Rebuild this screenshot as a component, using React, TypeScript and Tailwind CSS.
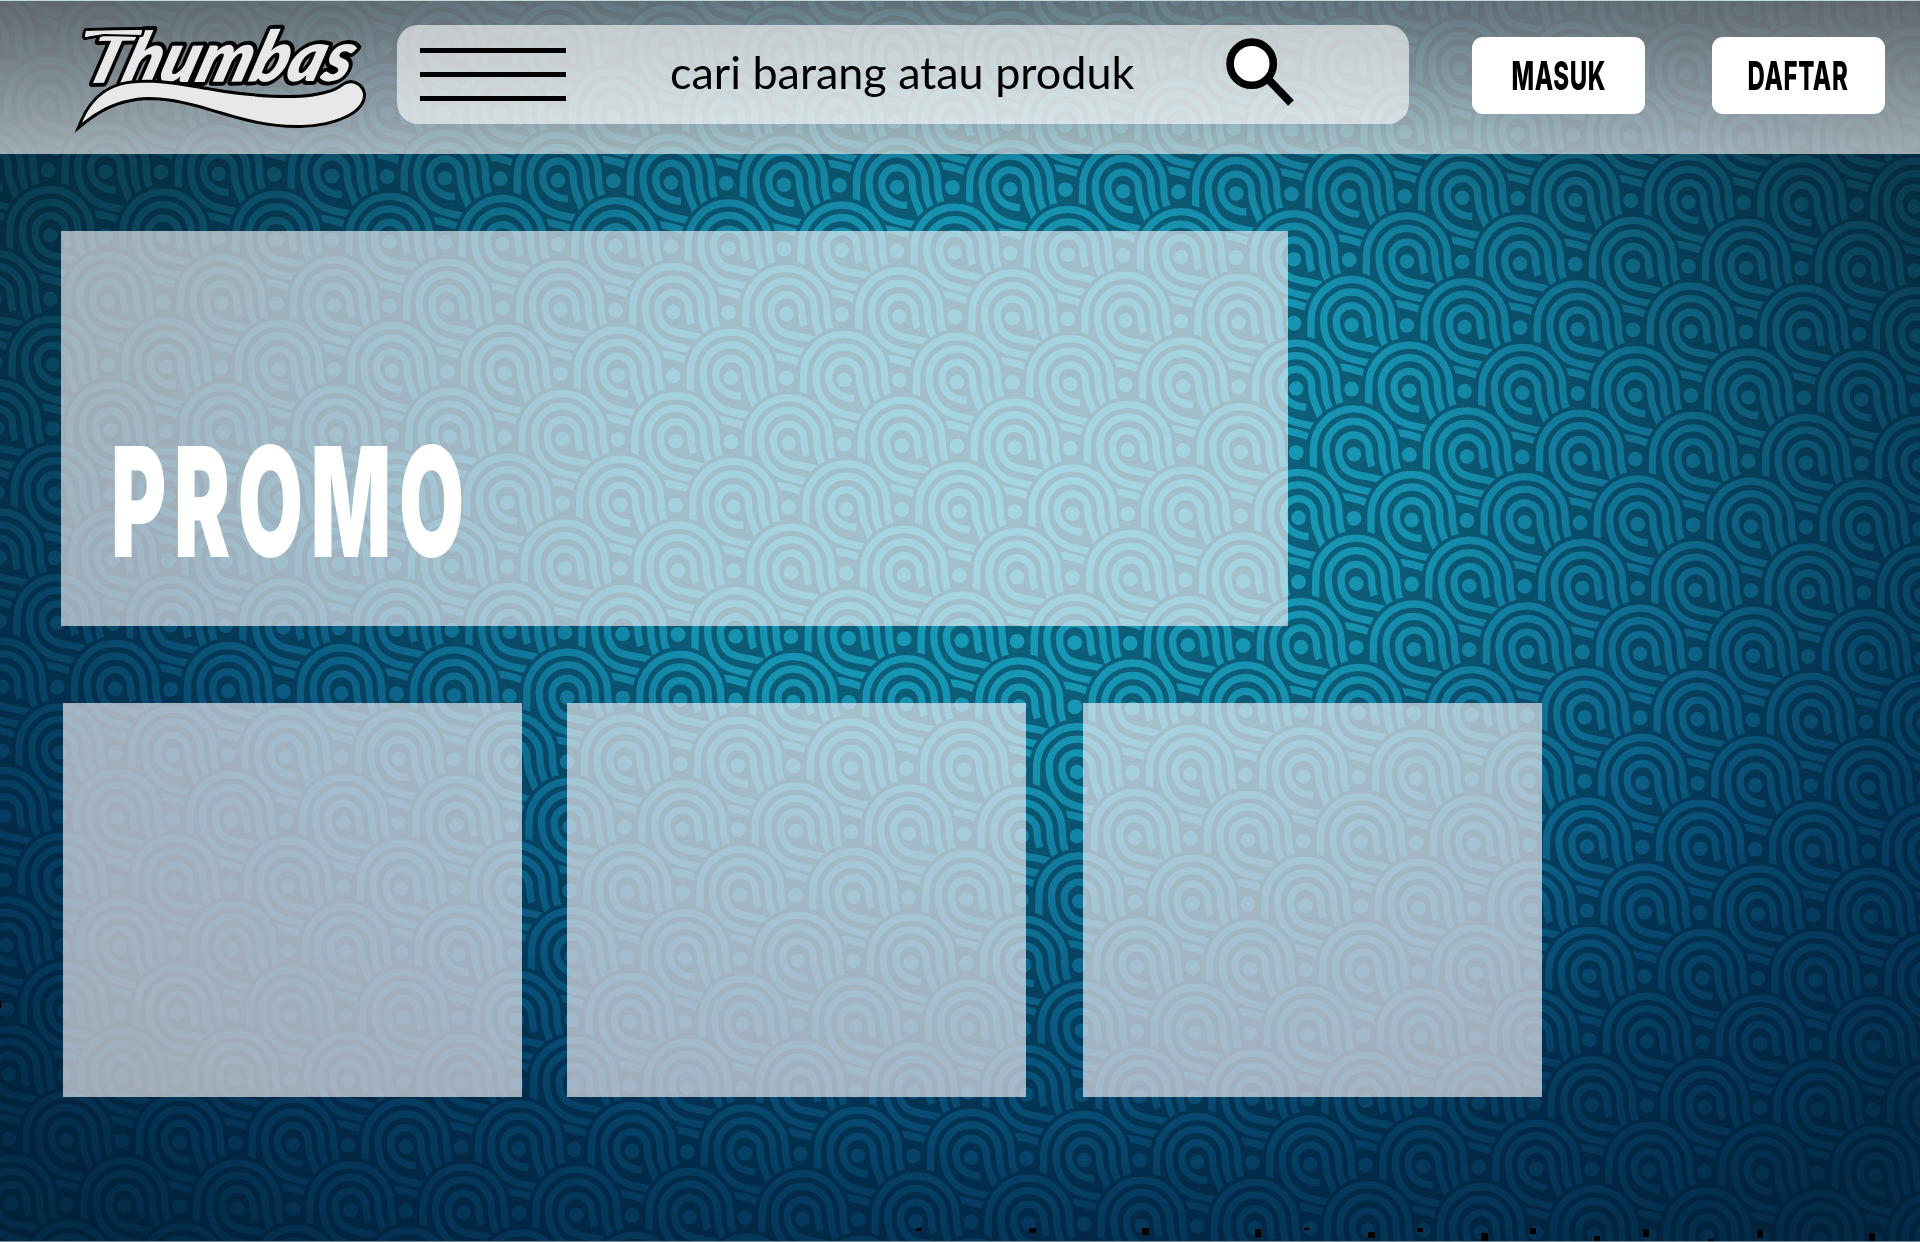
import React from "react";

// Half-rows whose inner ring runs its right leg down instead of curling out.
const LONG_LEG_ROWS = [0, 3, 5, 9, 12, 15];

type Motif = { x: number; y: number; long: boolean };

const motifs: Motif[] = [];
for (let k = -4; k <= 18; k++) {
  for (let m = -2; m <= 17; m++) {
    const col = m + (Math.abs(k) % 2 === 1 ? 0.5 : 0);
    const row = k / 2;
    motifs.push({
      x: 105.7 + col * 113.05 + row * 2.33,
      y: 171.7 + col * 2.18 + row * 129.3,
      long: LONG_LEG_ROWS.includes(k),
    });
  }
}

const specks = [
  [916, 1228, 5, 3],
  [1029, 1228, 7, 5],
  [1142, 1228, 7, 7],
  [1255, 1229, 6, 8],
  [1304, 1228, 5, 2],
  [1368, 1232, 7, 6],
  [1417, 1228, 6, 4],
  [1481, 1233, 7, 8],
  [1530, 1228, 6, 6],
  [1594, 1236, 6, 5],
  [1643, 1229, 6, 8],
  [1708, 1239, 6, 2],
  [1757, 1230, 6, 8],
  [1869, 1233, 6, 8],
  [0, 1001, 1, 7],
];

function Backdrop() {
  return (
    <svg className="absolute inset-0 h-full w-full" viewBox="0 0 1920 1242" aria-hidden="true">
      <defs>
        <linearGradient id="base" x1="0" y1="0" x2="0" y2="1">
          <stop offset="0" stopColor="#0e5365" />
          <stop offset="0.3" stopColor="#0c5572" />
          <stop offset="0.65" stopColor="#074c76" />
          <stop offset="1" stopColor="#053f66" />
        </linearGradient>
        <radialGradient id="glow" gradientUnits="userSpaceOnUse" cx="0" cy="0" r="1" gradientTransform="translate(1030 490) scale(980 720)">
          <stop offset="0" stopColor="#1aa3bf" />
          <stop offset="0.4" stopColor="#189ab8" stopOpacity="0.88" />
          <stop offset="0.72" stopColor="#1383a6" stopOpacity="0.4" />
          <stop offset="1" stopColor="#0b6690" stopOpacity="0" />
        </radialGradient>
        <radialGradient id="edge" gradientUnits="userSpaceOnUse" cx="0" cy="0" r="1" gradientTransform="translate(960 580) scale(1180 900)">
          <stop offset="0.6" stopColor="#00101f" stopOpacity="0" />
          <stop offset="1" stopColor="#00101f" stopOpacity="0.42" />
        </radialGradient>
        <g id="common">
          <path d="M-48 30V-5A48 48 0 0 1 48 -5V30Z" fill="#fff" />
          <g fill="none" stroke="#000" strokeWidth="7.3">
            <path d="M-40 24C-41 12 -40.5 4 -40.5 -5A40.5 40.5 0 0 1 40.5 -5C40.5 6 42 10 46 22" />
            <path d="M24 39C4 35 -8 34 -18 24C-26 15 -28 5 -28 -5A28 28 0 0 1 28 -5C28 8 31 15 37 28" />
            <path d="M-14 42Q0 43 15 49" />
          </g>
          <circle r="7.3" fill="#000" />
          <circle cy="64" r="7.4" fill="#000" />
        </g>
        <g id="long">
          <use href="#common" />
          <path d="M10 18.5C-6 18 -15.3 9 -15.3 -4A15.3 15.3 0 0 1 15.3 -4C15.3 8 18 13 25 30" fill="none" stroke="#000" strokeWidth="7.3" />
        </g>
        <g id="short">
          <use href="#common" />
          <path d="M34 29C20 20 3 24 -7 16C-13 11 -15.3 4 -15.3 -4A15.3 15.3 0 0 1 15.3 -4C15.3 3 16 6 18 12" fill="none" stroke="#000" strokeWidth="7.3" />
        </g>
        <mask id="grooves" maskUnits="userSpaceOnUse" x="0" y="0" width="1920" height="1242">
          <rect width="1920" height="1242" fill="#fff" />
          {motifs.map((p, i) => (
            <use key={i} href={p.long ? "#long" : "#short"} x={p.x} y={p.y} />
          ))}
        </mask>
      </defs>
      <rect width="1920" height="1242" fill="url(#base)" />
      <rect width="1920" height="1242" fill="url(#glow)" />
      <rect width="1920" height="1242" fill="url(#edge)" />
      <rect width="1920" height="1242" fill="#00142a" fillOpacity="0.43" mask="url(#grooves)" />
      {specks.map(([x, y, w, h], i) => (
        <rect key={i} x={x} y={y} width={w} height={h} fill="#000" />
      ))}
      <rect y="1241" width="1920" height="1" fill="#6f8798" />
    </svg>
  );
}

function Logo() {
  return (
    <svg className="h-[154px] w-[337px] shrink-0" viewBox="60 0 337 154" role="img" aria-label="Thumbas">
      <g strokeLinejoin="round" paintOrder="stroke">
        <text
          transform="translate(82 83) rotate(-0.5) skewX(-18)"
          fontFamily="Lato, sans-serif"
          fontStyle="italic"
          fontWeight="800"
          fontSize="70"
          textLength="265"
          lengthAdjust="spacingAndGlyphs"
          fill="#e8e8e8"
          stroke="#000"
          strokeWidth="8"
        >
          Thumbas
        </text>
        <path d="M86 31L142 30L141 34L104 33L85 37Z" fill="#e8e8e8" stroke="#000" strokeWidth="6" />
        <path d="M86 31L142 30L141 35L104 34L85 37Z" fill="#e8e8e8" />
        <path
          d="M82 123C89 106 103 84 138 83C180 80 220 98 290 98C318 98 336 92 343 86C352 79 362 86 363 94C364 110 338 124 300 125C240 126 200 97 148 97C118 98 98 110 82 123Z"
          fill="#e8e8e8"
          stroke="#000"
          strokeWidth="6"
          strokeLinejoin="miter"
          strokeMiterlimit="8"
        />
      </g>
    </svg>
  );
}

function NavButton({ label }: { label: string }) {
  return (
    <button className="flex h-[77px] w-[173px] items-center justify-center rounded-[11px] bg-white">
      <span className="inline-block scale-x-[0.6] font-['Inter'] text-[40px] leading-none font-extrabold tracking-[1px] whitespace-nowrap text-black">
        {label}
      </span>
    </button>
  );
}

export default function App() {
  return (
    <div className="relative h-[1242px] w-[1920px] overflow-hidden font-['Lato',sans-serif]">
      <Backdrop />
      <div className="relative">
        <header className="flex h-[154px] border-t border-[#c4dadb] bg-linear-to-b from-[rgba(150,140,140,0.62)] to-[rgba(238,235,235,0.65)] pl-[60px]">
          <div className="-mt-px">
            <Logo />
          </div>
          <div className="mt-6 flex h-[99px] w-[1012px] items-center rounded-[21px] bg-white/60">
            <div className="ml-[23px] flex w-[146px] flex-col gap-[19px]">
              <span className="h-[5px] bg-black" />
              <span className="h-[5px] bg-black" />
              <span className="h-[5px] bg-black" />
            </div>
            <div className="ml-[104px] w-[462px] pb-1">
              <span className="inline-block origin-left scale-x-[1.021] text-[44px] leading-none whitespace-nowrap text-black">
                cari barang atau produk
              </span>
            </div>
            <svg className="mb-[5px] ml-[91.5px] h-[70px] w-[72px]" viewBox="1224 36 72 70">
              <path d="M1268 78L1291 102" stroke="#000" strokeWidth="8" />
              <circle cx="1251.7" cy="62.7" r="21.6" fill="#fff" stroke="#000" strokeWidth="7.6" />
            </svg>
          </div>
          <div className="mt-9 ml-[63px] flex gap-[67px]">
            <NavButton label="MASUK" />
            <NavButton label="DAFTAR" />
          </div>
        </header>
        <main>
          <section className="mt-[77px] ml-[61px] flex h-[395px] w-[1227px] items-end bg-[rgba(248,246,248,0.63)] pb-[48px] pl-[50px]">
            <h1 className="origin-left scale-x-[0.55] font-['Inter'] text-[153px] leading-[153px] font-black tracking-[14px] whitespace-nowrap text-white">
              PROMO
            </h1>
          </section>
          <section className="mt-[77px] ml-[63px] flex">
            <div className="h-[394px] w-[459px] bg-[rgba(246,242,247,0.65)]" />
            <div className="ml-[45px] h-[394px] w-[459px] bg-[rgba(246,242,247,0.65)]" />
            <div className="ml-[57px] h-[394px] w-[459px] bg-[rgba(246,242,247,0.65)]" />
          </section>
        </main>
      </div>
    </div>
  );
}
